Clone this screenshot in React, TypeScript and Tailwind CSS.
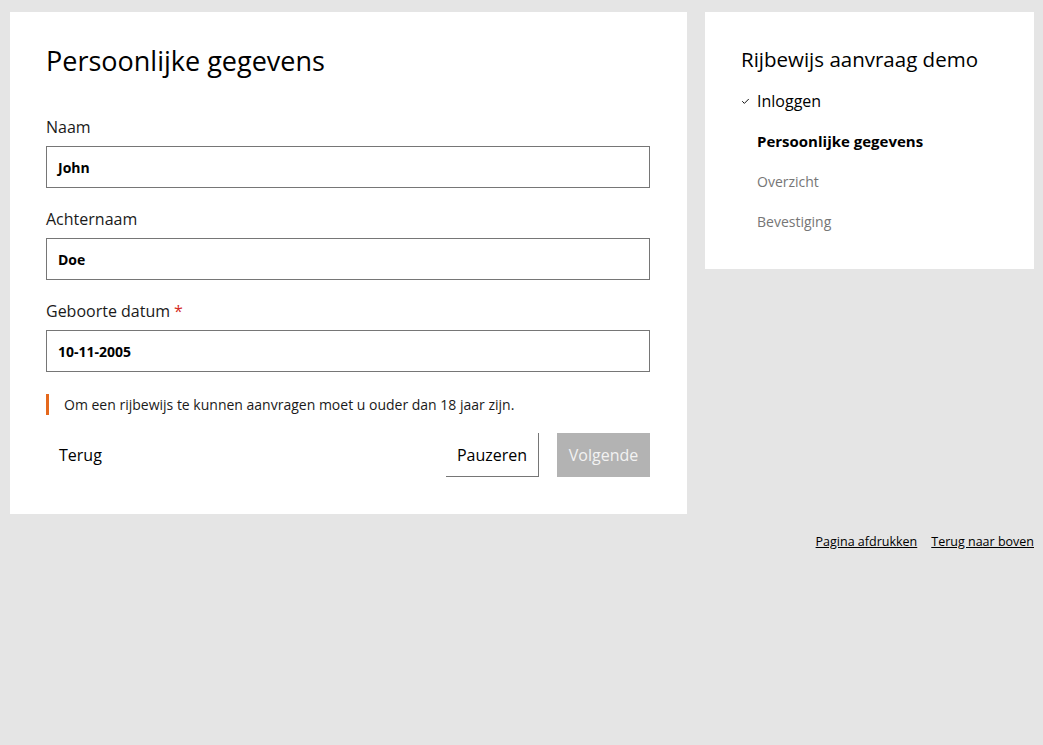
import { Check } from "lucide-react";

const font = { fontFamily: "'Open Sans', 'Noto Sans', sans-serif" };

interface FieldProps {
  label:     string;
  value:     string;
  required?: boolean;
}

function Field({ label, value, required }: FieldProps) {
  return (
    <div className="flex flex-col">
      <label className="text-[16px] leading-[24px] text-[#1a1a1a] mb-[7px]">
        {label}
        {required && <span className="text-[#d52b1e] ml-1">*</span>}
      </label>
      <div className="h-[42px] border border-[#767676] flex items-center px-[11px] text-[14px] font-bold text-black">
        {value}
      </div>
    </div>
  );
}

const steps = [
  { name: "Inloggen", state: "done" },
  { name: "Persoonlijke gegevens", state: "current" },
  { name: "Overzicht", state: "todo" },
  { name: "Bevestiging", state: "todo" },
];

export default function App() {
  return (
    <div className="min-h-[745px] bg-[#e5e5e5] pt-[12px] pl-[10px] pr-[9px]" style={font}>
      <div className="flex gap-[18px] items-start">
        <div className="w-[677px] bg-white px-[36px] pt-[31px] pb-[37px]">
          <h1 className="text-[27px] leading-[36px] text-black mb-[36px]">Persoonlijke gegevens</h1>
          <div className="w-[604px] flex flex-col gap-[19px]">
            <Field label="Naam" value="John" />
            <Field label="Achternaam" value="Doe" />
            <Field label="Geboorte datum" value="10-11-2005" required />
          </div>
          <div className="mt-[22px] border-l-[3px] border-[#e5681c] pl-[15px] text-[14px] leading-[21px] text-[#1a1a1a]">
            Om een rijbewijs te kunnen aanvragen moet u ouder dan 18 jaar zijn.
          </div>
          <div className="mt-[18px] w-[604px] flex items-center">
            <button className="h-[44px] px-[13px] text-[16px] text-black">Terug</button>
            <button className="ml-auto h-[44px] w-[93px] text-[16px] text-black border-r border-b border-[#767676]">
              Pauzeren
            </button>
            <button className="ml-[18px] h-[44px] w-[93px] text-[16px] bg-[#b3b3b3] text-[#f2f2f2]">
              Volgende
            </button>
          </div>
        </div>
        <div className="flex-1 bg-white px-[36px] pt-[33px] pb-[28px]">
          <h2 className="text-[20.5px] leading-[28px] text-black mb-[8px]">Rijbewijs aanvraag demo</h2>
          <ul className="flex flex-col">
            {steps.map((s) => (
              <li key={s.name} className="h-[40px] flex items-center text-[16px]">
                <span className="w-[16px] flex items-center">
                  {s.state === "done" && <Check size={9} strokeWidth={2.5} className="text-black" />}
                </span>
                <span
                  className={
                    s.state === "current"
                      ? "text-[15px] font-bold text-black"
                      : s.state === "done"
                      ? "text-black"
                      : "text-[14px] text-[#767676]"
                  }
                >
                  {s.name}
                </span>
              </li>
            ))}
          </ul>
        </div>
      </div>
      <div className="mt-[19px] flex justify-end gap-[14px] text-[12.5px] text-black">
        <a href="#" className="underline">Pagina afdrukken</a>
        <a href="#" className="underline">Terug naar boven</a>
      </div>
    </div>
  );
}
